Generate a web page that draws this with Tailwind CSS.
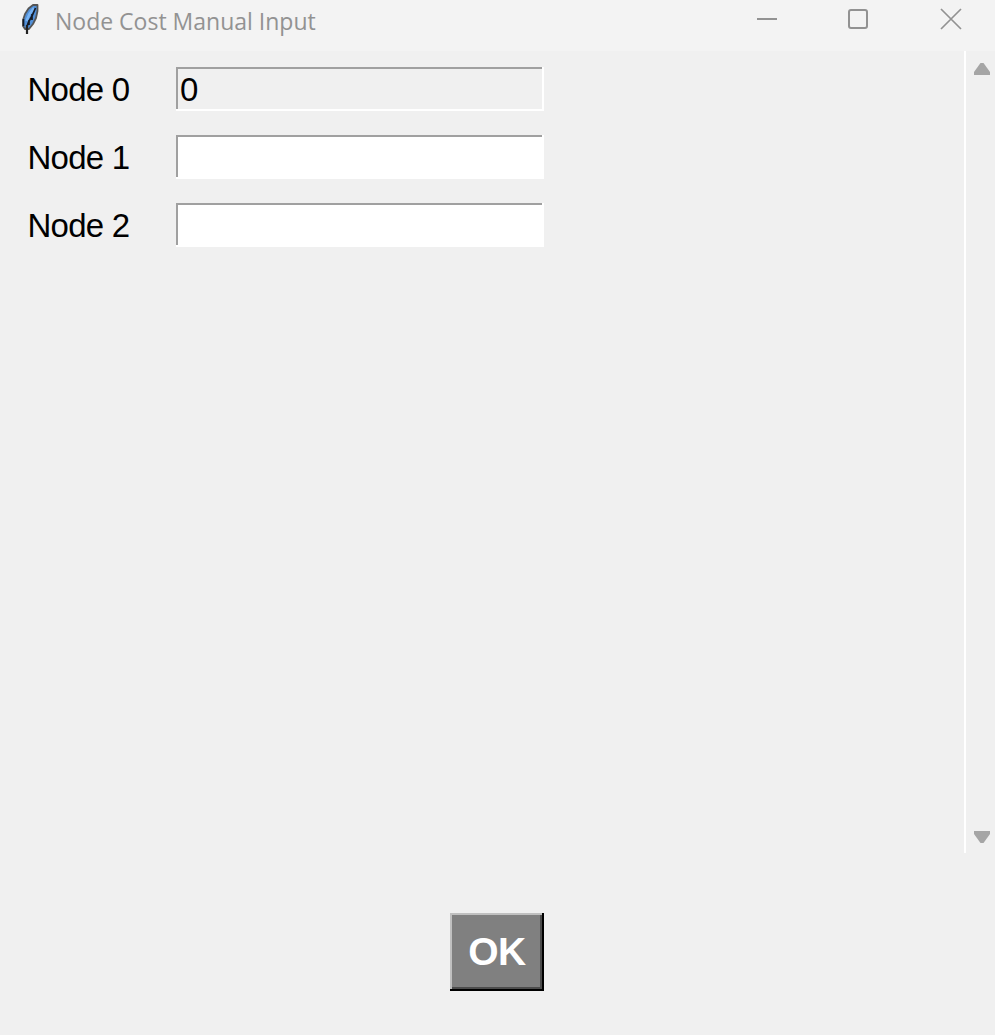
<!DOCTYPE html>
<html lang="en">
<head>
<meta charset="utf-8">
<title>Node Cost Manual Input</title>
<script src="https://cdn.jsdelivr.net/npm/@tailwindcss/browser@4"></script>
</head>
<body class="flex h-[1035px] w-[995px] flex-col overflow-hidden bg-[#f0f0f0] font-['Liberation_Sans',Arial,sans-serif] text-black">
<header class="flex h-[51px] shrink-0 items-start bg-[#f3f3f3]">
  <svg class="ml-[20px] mt-[3px] h-[33px] w-5" viewBox="0 0 20 33" fill="none">
    <path d="M17.500 2H13L8.500 5.500L5 11L3 17V23L5 26H9L13 21L16 15L17.500 8Z" fill="#5290d8" stroke="#555" stroke-width="1.800" stroke-linejoin="round"/>
    <path d="M14 5L9.500 11L6.500 18" stroke="#78b4f4" stroke-width="2.500"/>
    <path d="M15.500 5L12 13L8.500 19L6.500 25M3.500 16V23M12 11V17M9 17V22" stroke="#141a24" stroke-width="1.700"/>
    <path d="M7 22V31" stroke="#222" stroke-width="2.200"/>
  </svg>
  <h1 class="ml-[15px] mt-[6px] text-[23px] leading-[31px] whitespace-nowrap text-[#929292] font-['Open_Sans',sans-serif]">Node Cost Manual Input</h1>
  <div class="mr-[33px] ml-auto mt-[8px] flex">
    <svg class="mr-[70px] h-[22px] w-[22px]" viewBox="0 0 22 22"><path d="M1 11H21" stroke="#929292" stroke-width="2"/></svg>
    <svg class="mr-[70px] h-[22px] w-[22px]" viewBox="0 0 22 22"><rect x="1" y="2" width="18" height="18" rx="2" fill="none" stroke="#929292" stroke-width="2"/></svg>
    <svg class="h-[22px] w-[22px]" viewBox="0 0 22 22"><path d="M1 1L21 21M21 1L1 21" stroke="#929292" stroke-width="1.700"/></svg>
  </div>
</header>
<main class="flex h-[802px] shrink-0">
  <div class="flex w-[964px] flex-col gap-6 pt-4 pl-[27.500px] text-[33px] leading-[45px] tracking-[-0.75px]">
    <div class="flex h-11"><label class="w-[148.500px]">Node 0</label><div class="w-[368px] pl-[4px] shadow-[inset_-2px_-2px_#fff,inset_2px_2px_#a0a0a0]">0</div></div>
    <div class="flex h-11"><label class="w-[148.500px]">Node 1</label><div class="w-[368px] bg-white shadow-[inset_-2px_-2px_#fff,inset_2px_2px_#a0a0a0]"></div></div>
    <div class="flex h-11"><label class="w-[148.500px]">Node 2</label><div class="w-[368px] bg-white shadow-[inset_-2px_-2px_#fff,inset_2px_2px_#a0a0a0]"></div></div>
  </div>
  <div class="flex flex-1 flex-col justify-between border-l-2 border-white pt-3 pb-[10px] pl-2">
    <svg class="h-3 w-4" viewBox="0 0 16 12"><path d="M6.500 0H9.500L16 9V12H0V9Z" fill="#a5a5a5"/></svg>
    <svg class="h-3 w-4" viewBox="0 0 16 12"><path d="M0 0H16V3L9.500 12H6.500L0 3Z" fill="#a5a5a5"/></svg>
  </div>
</main>
<footer class="flex pt-[60px] pl-[450px]">
  <button class="h-[78px] w-[94px] bg-[#808080] text-[39px] leading-[78px] font-bold tracking-[-0.5px] text-white shadow-[inset_-2px_-2px_#000,inset_2px_2px_#c0c0c0,inset_-4px_-4px_#4c4c4c]">OK</button>
</footer>
</body>
</html>
